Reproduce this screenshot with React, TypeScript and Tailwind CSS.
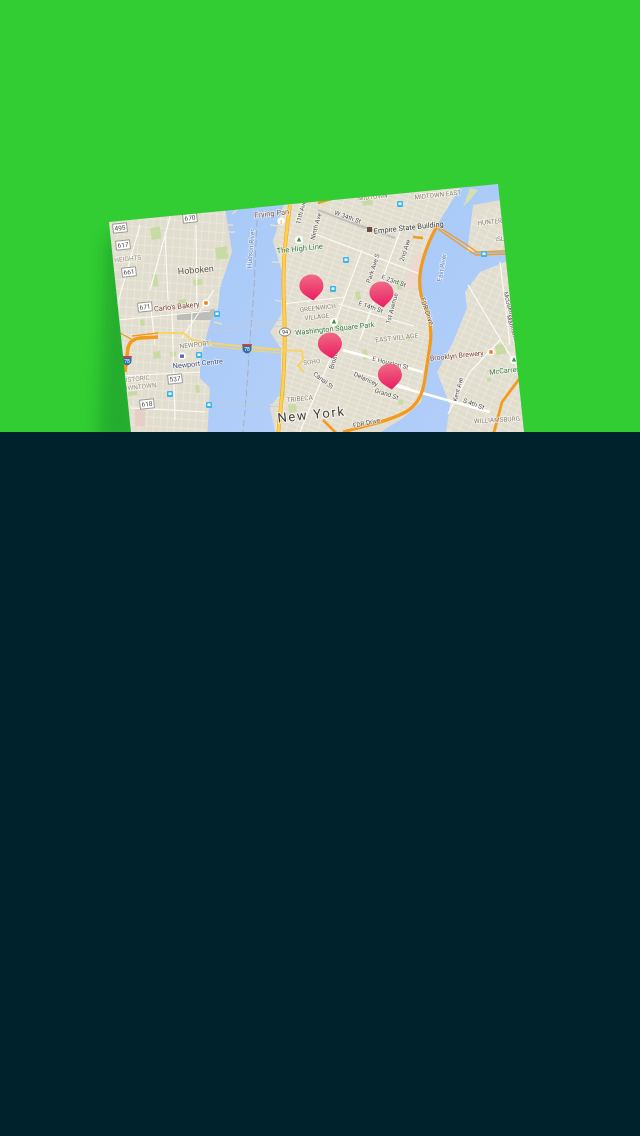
const labels: [number, number, number, string, number, string][] = [
  [272, 216, -6, "Frying Pan", 7.5, "#8a5a4a"],
  [196, 273, -5, "Hoboken", 9, "#5f5646"],
  [177, 309, -6, "Carlo's Bakery", 7.4, "#7f4a3d"],
  [195, 347, -6, "NEWPORT", 6.6, "#8c8672"],
  [198, 366, -6, "Newport Centre", 7.2, "#46527f"],
  [128, 261, -6, "HEIGHTS", 6.6, "#9a9480"],
  [138, 381, -6, "ISTORIC", 6.6, "#9a9480"],
  [140, 389, -6, "OWNTOWN", 6.6, "#9a9480"],
  [300, 401, -6, "TRIBECA", 6.6, "#8c8672"],
  [300, 251, -6, "The High Line", 7.6, "#3a7d45"],
  [253, 249, -85, "Hudson River", 6.6, "#6285b3"],
  [318, 310, -6, "GREENWICH", 6.4, "#8c8672"],
  [317, 319, -6, "VILLAGE", 6.4, "#8c8672"],
  [335, 331, -6, "Washington Square Park", 7.3, "#3a7d45"],
  [312, 364, -6, "SOHO", 6.4, "#8c8672"],
  [337, 356, -75, "Broadway", 6.4, "#55554c"],
  [322, 382, 38, "Canal St", 6.4, "#55554c"],
  [365, 381, 25, "Delancey", 6.4, "#55554c"],
  [386, 396, 18, "Grand St", 6.4, "#55554c"],
  [390, 365, 14, "E Houston St", 6.4, "#55554c"],
  [370, 309, 20, "E 14th St", 6.4, "#55554c"],
  [393, 283, 20, "E 23rd St", 6.4, "#55554c"],
  [394, 309, -75, "1st Avenue", 6.4, "#55554c"],
  [375, 269, -72, "Park Ave S", 6.4, "#55554c"],
  [407, 251, -72, "2nd Ave", 6.4, "#55554c"],
  [409, 230, -6, "Empire State Building", 7.4, "#3f3f38"],
  [347, 219, 20, "W 34th St", 6.4, "#55554c"],
  [318, 227, -75, "Ninth Ave", 6.4, "#55554c"],
  [373, 199, -6, "MIDTOWN", 6.4, "#8c8672"],
  [438, 197, -6, "MIDTOWN EAST", 6.4, "#8c8672"],
  [397, 340, -6, "EAST VILLAGE", 6.6, "#8c8672"],
  [425, 312, 70, "FDR Drive", 6.6, "#55554c"],
  [367, 425, -12, "FDR Drive", 6.4, "#55554c"],
  [444, 268, -80, "East River", 6.4, "#6285b3"],
  [457, 358, -6, "Brooklyn Brewery", 7, "#7f4a3d"],
  [505, 373, -6, "McCarren", 7.2, "#3a7d45"],
  [490, 224, -6, "HUNTER", 6.4, "#8c8672"],
  [500, 241, -6, "ISL", 6.4, "#8c8672"],
  [508, 309, 75, "McGuinness", 6.2, "#55554c"],
  [511, 330, 72, "Manhattan", 6.2, "#55554c"],
  [460, 390, -75, "Kent Ave", 6.2, "#55554c"],
  [473, 406, 20, "S 4th St", 6.4, "#55554c"],
  [497, 422, -3, "WILLIAMSBURG", 6.4, "#8c8672"],
  [303, 213, -75, "11th Ave", 6.2, "#55554c"],
];

const shields: [number, number, string][] = [
  [123, 245, "617"], [129, 272, "661"], [190, 218, "670"], [145, 307, "671"],
  [175, 379, "537"], [147, 404, "618"], [120, 228, "495"],
];

const parks: [number, number, number, number][] = [
  [150, 228, 10, 12], [193, 280, 9, 6], [152, 275, 5, 12], [178, 300, 8, 4], [153, 352, 7, 7],
  [128, 392, 9, 4], [277, 385, 7, 12], [333, 322, 8, 8], [355, 292, 5, 8], [362, 200, 10, 6],
  [396, 281, 6, 9], [407, 336, 5, 5], [362, 350, 5, 10], [398, 400, 5, 5], [495, 345, 10, 10],
  [476, 185, 5, 18], [487, 378, 4, 4], [288, 405, 8, 8], [195, 385, 4, 8], [140, 320, 4, 6],
  [170, 352, 6, 5], [215, 248, 12, 12],
];

const transit: [number, number][] = [
  [217, 314], [199, 355], [170, 394], [209, 405], [400, 204], [346, 260], [333, 289], [484, 254],
];

const pins: [number, number][] = [
  [311.5, 287], [381.5, 294], [330, 345], [390, 376],
];

const pinPath = "M0 -12.5 C6.9 -12.5 12 -7.4 12 -1 C12 5 7 8.5 1.3 13.5 C-4.5 9.5 -12 5.5 -12 -1 C-12 -7.4 -6.9 -12.5 0 -12.5 Z";

const smooth = (p: number[][]) => {
  let d = `M${p[0][0]} ${p[0][1]}`;
  for (let i = 1; i < p.length - 1; i++) {
    const mx = (p[i][0] + p[i + 1][0]) / 2;
    const my = (p[i][1] + p[i + 1][1]) / 2;
    d += ` Q${p[i][0]} ${p[i][1]} ${mx} ${my}`;
  }
  const l = p[p.length - 1];
  return `${d} L${l[0]} ${l[1]}`;
};

const westSide = smooth([[290, 205], [285, 242], [283, 282], [285, 325], [284, 375], [280, 415], [278, 436]]);
const fdr = smooth([[437, 226], [425, 248], [417, 288], [433, 325], [427, 365], [422, 398], [403, 416], [343, 432]]);

function App() {
  return (
    <div className="flex h-[1136px] w-[640px] flex-col overflow-hidden bg-[#00222c] font-['Roboto',sans-serif]">
      <div className="relative h-[432px] w-full shrink-0 overflow-hidden bg-[#32cd32]">
        <svg viewBox="0 0 640 432" className="block h-[432px] w-[640px]">
          <defs>
            <clipPath id="card"><polygon points="109,222 498,184 524,432 131,432" /></clipPath>
            <filter id="soft" filterUnits="userSpaceOnUse" x="40" y="170" width="170" height="330"><feGaussianBlur stdDeviation="8" /></filter>
            <filter id="resample" filterUnits="userSpaceOnUse" x="90" y="170" width="450" height="280"><feGaussianBlur stdDeviation="0.35" /></filter>
            <linearGradient id="water" x1="0" y1="0" x2="0.7" y2="1">
              <stop offset="0" stopColor="#a6c9f7" />
              <stop offset="1" stopColor="#b2cef9" />
            </linearGradient>
            <linearGradient id="pin" x1="0" y1="0" x2="0" y2="1">
              <stop offset="0" stopColor="#f06a85" />
              <stop offset="1" stopColor="#e91e63" />
            </linearGradient>
            <pattern id="gridNJ" width="7" height="9" patternUnits="userSpaceOnUse" patternTransform="rotate(4)">
              <path d="M0 0H7M0 0V9" stroke="#f6f4ec" strokeWidth="0.7" fill="none" />
            </pattern>
            <pattern id="gridMan" width="10" height="5" patternUnits="userSpaceOnUse" patternTransform="rotate(19)">
              <path d="M0 0H10M0 0V5" stroke="#f6f4ec" strokeWidth="0.7" fill="none" />
            </pattern>
            <pattern id="gridBk" width="9" height="6" patternUnits="userSpaceOnUse" patternTransform="rotate(24)">
              <path d="M0 0H9M0 0V6" stroke="#f6f4ec" strokeWidth="0.7" fill="none" />
            </pattern>
          </defs>

          <polygon points="106,236 122,236 142,445 98,445" fill="#158a2c" opacity="0.48" filter="url(#soft)" />

          <g clipPath="url(#card)">
            <g filter="url(#resample)">
              <rect x="100" y="180" width="430" height="260" fill="#e2decf" />
              <rect x="100" y="180" width="125" height="260" fill="url(#gridNJ)" />
              <polygon points="280,190 470,180 425,260 418,290 432,325 420,410 300,440 275,440" fill="url(#gridMan)" />
              <polygon points="440,240 530,180 530,440 440,440" fill="url(#gridBk)" />

              {parks.map(([x, y, w, h], i) => (
                <rect key={i} x={x} y={y} width={w} height={h} fill="#c9dba4" transform={`rotate(-8 ${x} ${y})`} />
              ))}
              <rect x="135" y="408" width="10" height="18" fill="#e6cfc4" />
              <polygon points="415,255 421,250 423,280 410,290 402,288" fill="#eed8d2" />
              <polygon points="177,314 215,309 214,320 177,320" fill="#bdbdb9" />

              <polygon
                fill="url(#water)"
                points="225,208 232,252 220,288 218,308 210,322 200,362 200,378 210,388 207,440 277,440 270,408 281,392 281,348 270,332 281,315 283,275 273,242 285,200"
              />
              <path d="M254 290 L250 340 L246 400 L243 432" stroke="#a3aab3" strokeWidth="0.8" strokeDasharray="7 3" fill="none" />
              <path d="M257 220 L254 290" stroke="#a3aab3" strokeWidth="0.8" strokeDasharray="7 3" fill="none" />
              <path d="M210 326 L282 320 M209 332 L282 326 M211 402 L282 407" stroke="#c4ccd2" strokeWidth="0.8" fill="none" />

              <polygon
                fill="url(#water)"
                points="460,188 437,225 423,255 418,288 433,325 427,365 421,402 403,418 368,440 445,440 450,405 437,372 453,342 467,308 465,292 480,272 505,262 510,259 506,250 467,252 470,230 473,205 500,200 506,180"
              />
              <polygon points="470,188 463,207 470,200 478,190" fill="#d4e0b4" />
              <path d="M237 210 L232 214 M232 250 L226 252 M214 322 L222 324 M205 345 L212 345 M273 240 L283 243 M275 300 L283 302 M270 405 L279 403 M225 225 L233 225 M225 232 L235 232 M270 225 L280 226 M272 262 L281 262" stroke="#e2decf" strokeWidth="1.6" fill="none" />

              <path d="M118 320 L210 311 M282 304 L345 297 M214 290 L182 338 M172 210 L150 290 M140 225 L113 320 M172 311 L175 420 M192 312 L190 350 M196 225 L197 310 M130 408 L205 412 M165 232 L168 300 M150 300 L155 345 M120 376 L200 372" stroke="#fbfaf6" strokeWidth="1.1" fill="none" />
              <path d="M343 350 L423 372 M393 385 L490 412" stroke="#ffffff" strokeWidth="2.8" fill="none" />
              <path d="M338 304 L414 326 M310 232 L420 274 M352 370 L410 388 M340 335 L300 432 M362 250 L325 350 M402 226 L360 340 M468 285 L520 372 M500 262 L510 345 M448 414 L470 372 L500 340" stroke="#fbfaf6" strokeWidth="1.2" fill="none" />
              <path d="M318 210 L365 228 M345 220 L395 238" stroke="#c2c2bd" strokeWidth="2" fill="none" />

              <path d={westSide} stroke="#f5a623" strokeWidth="3.8" fill="none" />
              <path d={westSide} stroke="#fbd24f" strokeWidth="2.6" fill="none" />
              <path d="M157 333 L183 333 L192 340 L210 343 L247 347 L283 350 L302 351 L303 360 L298 366 L304 372" stroke="#f7d46a" strokeWidth="2.2" fill="none" />
              <path d="M210 346 L247 350 L283 353" stroke="#f7d46a" strokeWidth="1.2" fill="none" />
              <path d="M125 372 L128 348 Q130 339 140 338 L158 337" stroke="#f49a1e" strokeWidth="3.6" fill="none" />
              <path d="M120 333 L135 341 M132 336 L158 333" stroke="#f49a1e" strokeWidth="1.3" fill="none" />
              <path d={fdr} stroke="#f49a1e" strokeWidth="3.2" fill="none" />
              <path d="M323 420 L337 434 M318 203 L331 199 M413 237 L423 238" stroke="#f49a1e" strokeWidth="2.6" fill="none" />
              <path d="M437 226 L467 245 L477 252 L506 251" stroke="#f49a1e" strokeWidth="1.4" fill="none" />
              <path d="M438 229 L465 248 L476 255 L506 254" stroke="#f49a1e" strokeWidth="1.4" fill="none" />
              <path d="M470 253 L506 252" stroke="#b5b5af" strokeWidth="1.4" fill="none" />
              <path d="M520 378 L502 402 L493 436" stroke="#f49a1e" strokeWidth="2.8" fill="none" />

              {transit.map(([x, y], i) => (
                <g key={i}>
                  <rect x={x - 3} y={y - 3} width="6" height="6" rx="1" fill="#3db4ee" />
                  <rect x={x - 1.5} y={y - 1.5} width="3" height="2.4" fill="#ffffff" />
                </g>
              ))}

              {shields.map(([x, y, t]) => (
                <g key={t} transform={`rotate(-6 ${x} ${y})`}>
                  <rect x={x - 7} y={y - 4.5} width="14" height="9" fill="#ffffff" stroke="#8a8a84" strokeWidth="0.8" />
                  <text x={x} y={y + 2.3} textAnchor="middle" fontSize="6.5" fill="#444440">{t}</text>
                </g>
              ))}

              {[[127, 360, "78"], [247, 348, "78"]].map(([x, y, t]) => (
                <g key={String(x)}>
                  <path d={`M${Number(x) - 4.5} ${Number(y) - 4} h9 v5 q0 3 -4.5 4.5 q-4.5 -1.5 -4.5 -4.5 z`} fill="#2f6fa8" />
                  <rect x={Number(x) - 4.5} y={Number(y) - 4} width="9" height="1.8" fill="#d33f3f" />
                  <text x={Number(x)} y={Number(y) + 2.5} textAnchor="middle" fontSize="5" fill="#ffffff">{t}</text>
                </g>
              ))}
              <ellipse cx="285" cy="332" rx="5.5" ry="4" fill="#ffffff" stroke="#666660" strokeWidth="0.8" />
              <text x="285" y="334.2" textAnchor="middle" fontSize="5.5" fill="#333">94</text>

              <circle cx="206" cy="303" r="3.6" fill="#ffffff" />
              <rect x="204.3" y="301.3" width="3.4" height="3.4" fill="#ee7b14" />
              <circle cx="491" cy="352" r="3.6" fill="#ffffff" />
              <rect x="489.3" y="350.3" width="3.4" height="3.4" fill="#ee7b14" />
              <circle cx="281" cy="221" r="3.6" fill="#ffffff" />
              <text x="281" y="223.5" textAnchor="middle" fontSize="6" fill="#ee7b14">I</text>
              <circle cx="182" cy="356" r="3.6" fill="#ffffff" />
              <rect x="180" y="354.5" width="4" height="3.4" fill="#5c6bc0" />
              <rect x="367" y="227" width="5" height="5" fill="#6d4c41" />
              {[[299, 240], [334, 322], [514, 360]].map(([x, y]) => (
                <g key={x}>
                  <circle cx={x} cy={y} r="4" fill="#ffffff" />
                  <path d={`M${x} ${y - 3} l2.2 4.5 h-4.4 z`} fill="#3a8f3f" />
                </g>
              ))}

              {labels.map(([x, y, r, t, s, c], i) => (
                <text
                  key={i}
                  x={x}
                  y={y}
                  fontSize={s}
                  fill={c}
                  textAnchor="middle"
                  transform={`rotate(${r} ${x} ${y})`}
                  stroke="#ffffff"
                  strokeOpacity="0.6"
                  strokeWidth="1.5"
                  className="[paint-order:stroke]"
                >
                  {t}
                </text>
              ))}
              <text
                x="312"
                y="419"
                fontSize="13"
                fill="#45443a"
                textAnchor="middle"
                letterSpacing="1.7"
                transform="rotate(-6 312 419)"
                stroke="#ffffff"
                strokeOpacity="0.7"
                strokeWidth="2"
                className="[paint-order:stroke]"
              >
                New York
              </text>
              {pins.map(([x, y], i) => (
                <path key={i} d={pinPath} transform={`translate(${x} ${y}) rotate(-3)`} fill="url(#pin)" />
              ))}
            </g>
          </g>
        </svg>
      </div>
      <div className="flex-1 bg-[#00222c]" />
    </div>
  );
}

export default App;
